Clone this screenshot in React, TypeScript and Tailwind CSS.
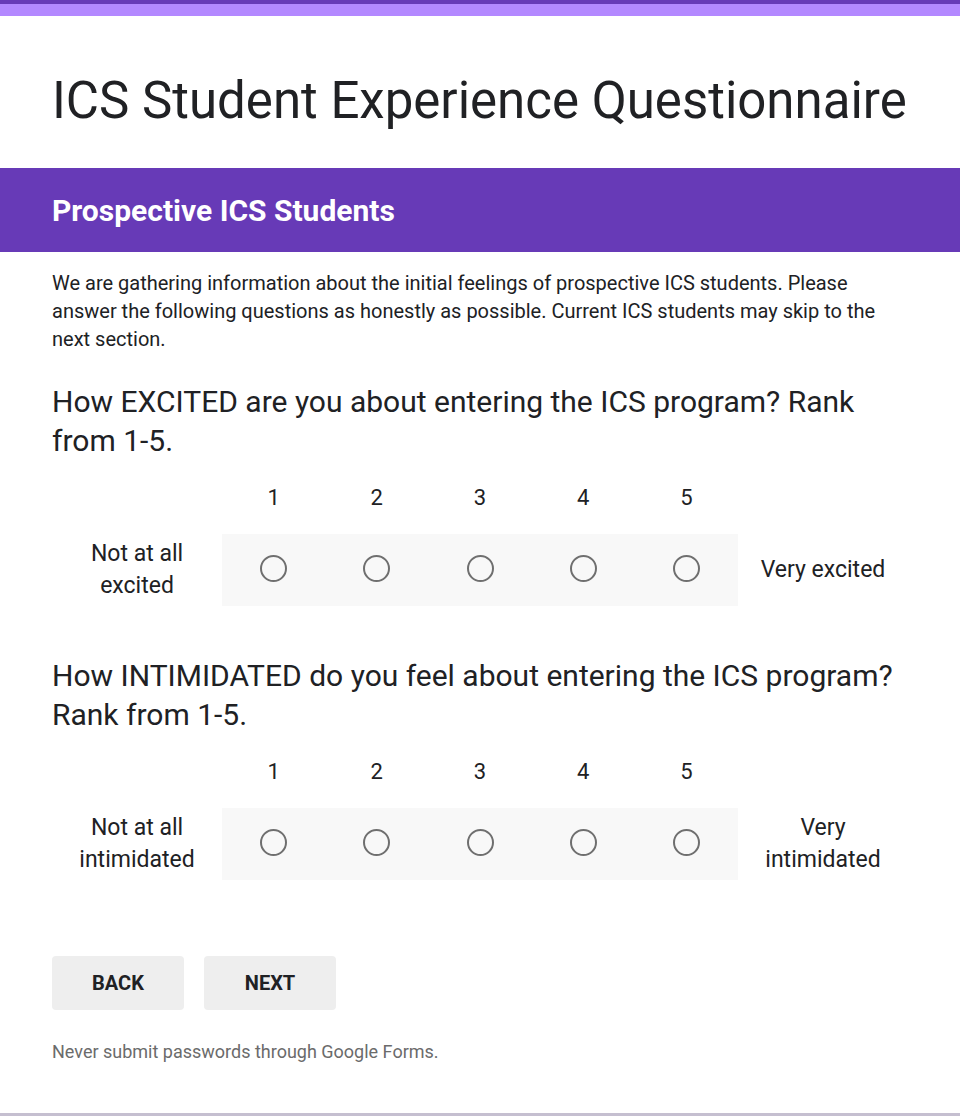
const scale = [1, 2, 3, 4, 5];

function ScaleQuestion({
  question,
  low,
  high,
}: {
  question: React.ReactNode;
  low: React.ReactNode;
  high: React.ReactNode;
}) {
  return (
    <div>
      <h2 className="text-[30px] leading-[39px] text-[#202124]">{question}</h2>
      <div className="mt-[24px] flex">
        <div className="w-[170px] shrink-0" />
        <div className="flex w-[516px]">
          {scale.map((n) => (
            <div key={n} className="flex-1 text-center text-[22px] leading-[28px] text-[#202124]">
              {n}
            </div>
          ))}
        </div>
      </div>
      <div className="mt-[22px] flex items-center">
        <div className="w-[170px] shrink-0 text-center text-[23px] leading-[32px] text-[#202124]">{low}</div>
        <div className="flex h-[72px] w-[516px] items-center bg-[#f8f8f8] pb-[3px]">
          {scale.map((n) => (
            <div key={n} className="flex flex-1 justify-center">
              <span className="block h-[27px] w-[27px] rounded-full border-2 border-[#6f6f6f]" />
            </div>
          ))}
        </div>
        <div className="w-[170px] shrink-0 text-center text-[23px] leading-[32px] text-[#202124]">{high}</div>
      </div>
    </div>
  );
}

export default function App() {
  return (
    <div className="relative min-h-[1116px] bg-white font-['Roboto',sans-serif]">
      <div className="h-[4px] bg-[#673ab7]" />
      <div className="h-[12px] bg-[#b388ff]" />
      <h1 className="px-[52px] pt-[57px] pb-[39px] text-[51px] leading-[56px] text-[#202124]">
        ICS Student Experience Questionnaire
      </h1>
      <div className="flex h-[84px] items-center bg-[#673ab7] px-[52px]">
        <h2 className="text-[30px] font-bold text-white">Prospective ICS Students</h2>
      </div>
      <div className="px-[52px]">
        <p className="mt-[17px] text-[20px] leading-[28px] text-[#202124]">
          We are gathering information about the initial feelings of prospective ICS students. Please
          answer the following questions as honestly as possible. Current ICS students may skip to the
          next section.
        </p>
        <div className="mt-[29px]">
          <ScaleQuestion
            question="How EXCITED are you about entering the ICS program? Rank from 1-5."
            low={<>Not at all<br />excited</>}
            high="Very excited"
          />
        </div>
        <div className="mt-[50px]">
          <ScaleQuestion
            question="How INTIMIDATED do you feel about entering the ICS program? Rank from 1-5."
            low={<>Not at all<br />intimidated</>}
            high={<>Very<br />intimidated</>}
          />
        </div>
        <div className="mt-[76px] flex gap-[20px]">
          <button className="h-[54px] w-[132px] rounded-[4px] bg-[#eeeeee] text-[20px] font-bold text-[#202124]">
            BACK
          </button>
          <button className="h-[54px] w-[132px] rounded-[4px] bg-[#eeeeee] text-[20px] font-bold text-[#202124]">
            NEXT
          </button>
        </div>
        <p className="mt-[29px] text-[18px] leading-[26px] text-[#6b6b6b]">
          Never submit passwords through Google Forms.
        </p>
      </div>
      <div className="absolute inset-x-0 bottom-0 h-[3px] bg-[#c5bfd0]" />
    </div>
  );
}
